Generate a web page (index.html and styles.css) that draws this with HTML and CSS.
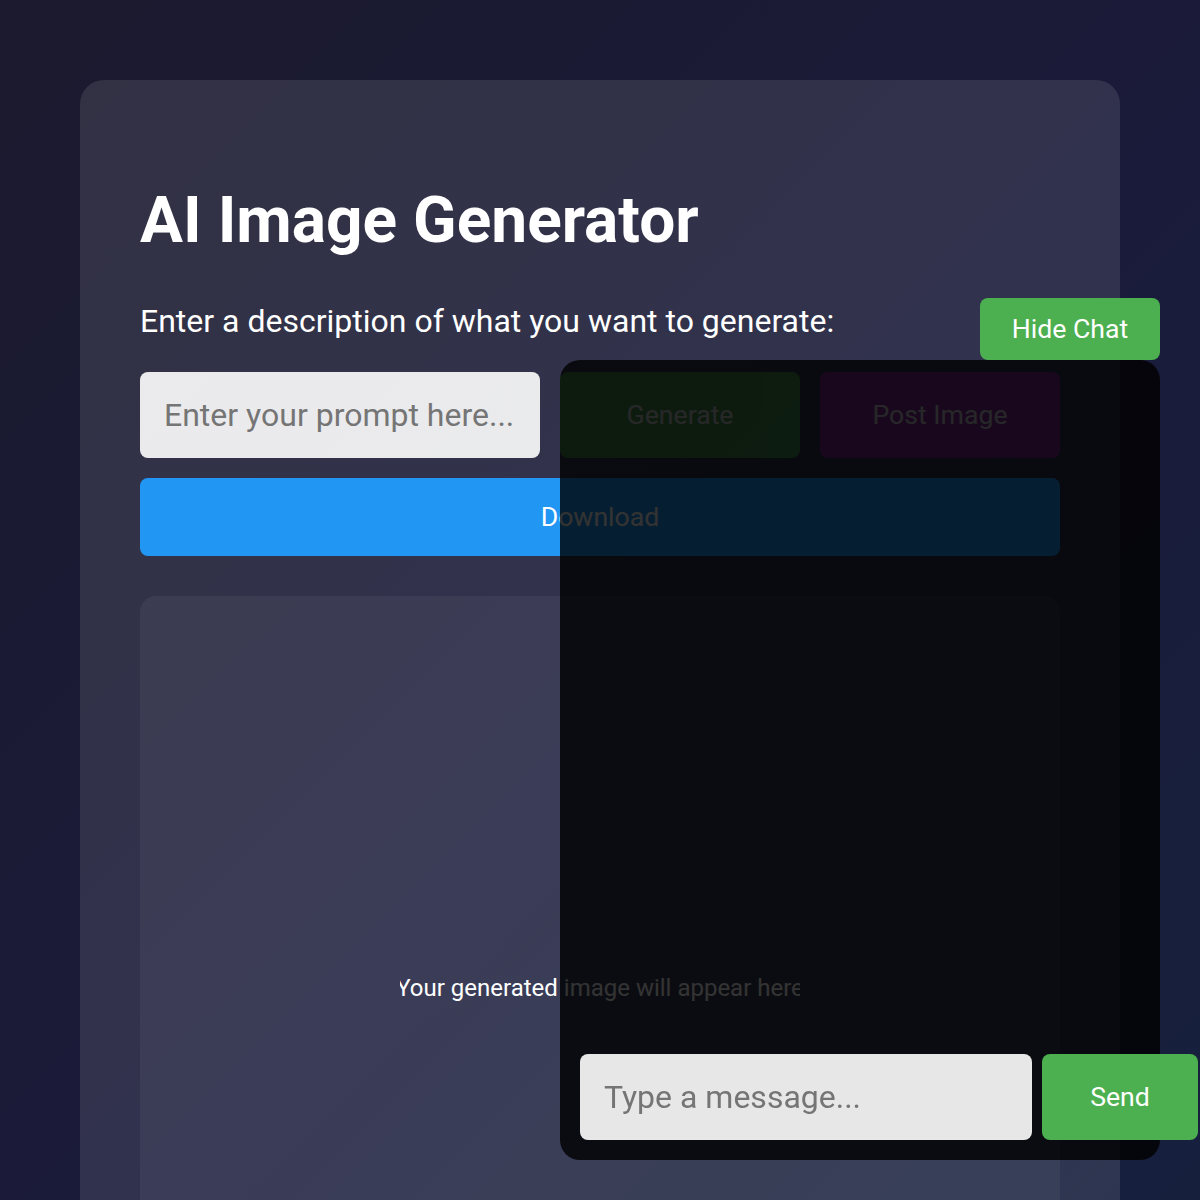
FILE: index.html
```html
<!DOCTYPE html>
<html lang="en">
<head>
<meta charset="utf-8">
<title>AI Image Generator</title>
<link rel="stylesheet" href="styles.css">
</head>
<body>
<main class="card">
  <h1 class="title">AI Image Generator</h1>
  <p class="label">Enter a description of what you want to generate:</p>
  <div class="controls">
    <input class="prompt" type="text" placeholder="Enter your prompt here...">
    <button class="btn btn-generate">Generate</button>
    <button class="btn btn-post">Post Image</button>
  </div>
  <button class="btn btn-download">Download</button>
  <div class="preview">
    <div class="preview-text"><span>Your generated image will appear here</span></div>
  </div>
</main>

<button class="btn toggle-chat">Hide Chat</button>
<aside class="chat">
  <div class="chat-log"></div>
  <div class="chat-form">
    <input class="chat-input" type="text" placeholder="Type a message...">
    <button class="btn btn-send">Send</button>
  </div>
</aside>
</body>
</html>
```

FILE: styles.css
```css
* { box-sizing: border-box; }

html { background: #1a1a2e; }

body {
  margin: 0;
  padding: 80px;
  min-height: 100vh;
  font-family: Roboto, "Liberation Sans", sans-serif;
  color: #ffffff;
  background: linear-gradient(135deg, #1b1a2e 0%, #1a1b3a 50%, #15223f 100%);
}

.card {
  background: rgba(255, 255, 255, 0.1);
  border-radius: 24px;
  padding: 60px;
}

.title {
  font-size: 64px;
  font-weight: 700;
  margin: 43px 0 45px;
  line-height: 75px;
}

.label {
  font-size: 32px;
  line-height: 37px;
  margin: 0 0 32px;
}

.controls {
  display: flex;
  gap: 20px;
}

.prompt {
  width: 400px;
  height: 86px;
  padding: 0 24px;
  border: none;
  border-radius: 8px;
  background: rgba(255, 255, 255, 0.9);
  font-family: Roboto, "Liberation Sans", sans-serif;
  font-size: 32px;
  color: #333;
}

.prompt::placeholder, .chat-input::placeholder { color: #757575; }

.btn {
  border: none;
  border-radius: 8px;
  color: #ffffff;
  font-family: Roboto, "Liberation Sans", sans-serif;
  font-size: 26.67px;
  cursor: pointer;
}

.btn-generate, .btn-post {
  flex: 1;
  height: 86px;
}

.btn-generate { background: #4caf50; opacity: 0.7; }
.btn-post { background: #9c27b0; opacity: 0.7; }

.btn-download {
  display: block;
  width: 100%;
  height: 78px;
  margin-top: 20px;
  background: #2196f3;
}

.preview {
  margin-top: 40px;
  height: 784px;
  border-radius: 16px;
  background: rgba(255, 255, 255, 0.05);
  display: flex;
  align-items: center;
  justify-content: center;
}

.preview-text {
  width: 400px;
  overflow: hidden;
  display: flex;
  justify-content: center;
  font-size: 24px;
  color: #ffffff;
  white-space: nowrap;
}

.toggle-chat {
  position: fixed;
  right: 40px;
  top: 298px;
  width: 180px;
  height: 62px;
  background: #4caf50;
  z-index: 3;
}

.chat {
  position: fixed;
  right: 40px;
  bottom: 40px;
  width: 600px;
  height: 800px;
  border-radius: 20px;
  background: rgba(0, 0, 0, 0.8);
  padding: 20px;
  display: flex;
  flex-direction: column;
  z-index: 2;
}

.chat-log { flex: 1; }

.chat-form {
  display: flex;
  gap: 10px;
  width: 618px;
}

.chat-input {
  width: 452px;
  height: 86px;
  padding: 0 24px;
  border: none;
  border-radius: 8px;
  background: rgba(255, 255, 255, 0.9);
  font-family: Roboto, "Liberation Sans", sans-serif;
  font-size: 32px;
}

.btn-send {
  width: 156px;
  height: 86px;
  background: #4caf50;
}
```
